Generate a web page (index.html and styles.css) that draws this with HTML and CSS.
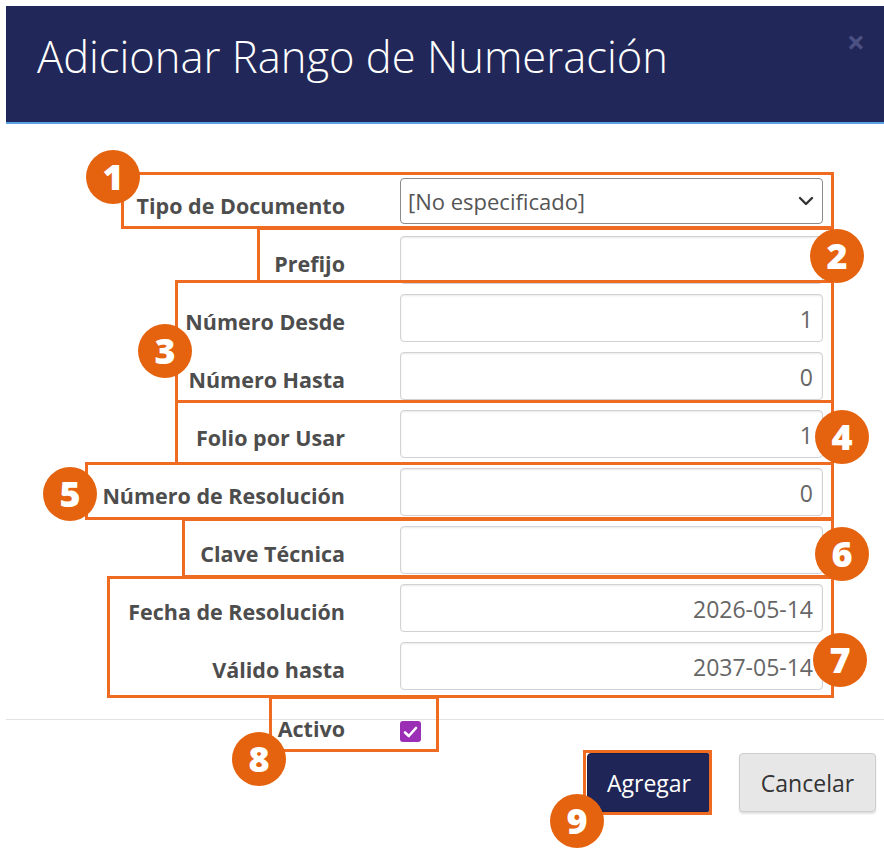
FILE: index.html
```html
<!DOCTYPE html>
<html lang="es">
<head>
<meta charset="utf-8">
<title>Adicionar Rango de Numeración</title>
<link rel="stylesheet" href="styles.css">
</head>
<body>
<div class="modal">
  <div class="modal-header">
    <h1 class="modal-title">Adicionar Rango de Numeración</h1>
    <span class="close">×</span>
  </div>
  <div class="modal-body">
    <div class="row">
      <label class="lbl">Tipo de Documento</label>
      <div class="select">
        <span>[No especificado]</span>
        <svg class="chev" width="16" height="10" viewBox="0 0 16 10"><path d="M2 2 L8 8 L14 2" fill="none" stroke="#333" stroke-width="2.4" stroke-linecap="round" stroke-linejoin="round"/></svg>
      </div>
    </div>
    <div class="row"><label class="lbl">Prefijo</label><div class="input"></div></div>
    <div class="row"><label class="lbl">Número Desde</label><div class="input">1</div></div>
    <div class="row"><label class="lbl">Número Hasta</label><div class="input">0</div></div>
    <div class="row"><label class="lbl">Folio por Usar</label><div class="input">1</div></div>
    <div class="row"><label class="lbl">Número de Resolución</label><div class="input">0</div></div>
    <div class="row"><label class="lbl">Clave Técnica</label><div class="input"></div></div>
    <div class="row"><label class="lbl">Fecha de Resolución</label><div class="input">2026-05-14</div></div>
    <div class="row"><label class="lbl">Válido hasta</label><div class="input">2037-05-14</div></div>
  </div>
  <div class="modal-footer">
    <div class="row row-check">
      <label class="lbl">Activo</label>
      <div class="checkbox"><svg width="15" height="12" viewBox="0 0 15 12"><path d="M2 6.5 L5.8 10 L13 2" fill="none" stroke="#fff" stroke-width="2.6" stroke-linecap="round" stroke-linejoin="round"/></svg></div>
    </div>
    <div class="actions">
      <button class="btn btn-primary">Agregar</button>
      <button class="btn btn-default">Cancelar</button>
    </div>
  </div>
</div>

<div class="box b1"></div>
<div class="box b2"></div>
<div class="box b3"></div>
<div class="box b4"></div>
<div class="box b5"></div>
<div class="box b6"></div>
<div class="box b7"></div>
<div class="box b8"></div>
<div class="box b9"></div>

<div class="badge n1">1</div>
<div class="badge n2">2</div>
<div class="badge n3">3</div>
<div class="badge n4">4</div>
<div class="badge n5">5</div>
<div class="badge n6">6</div>
<div class="badge n7">7</div>
<div class="badge n8">8</div>
<div class="badge n9">9</div>
</body>
</html>
```

FILE: styles.css
```css
html, body {
  margin: 0;
  padding: 0;
  background: #fff;
  width: 884px;
  height: 856px;
  overflow: hidden;
  font-family: "Open Sans", "Liberation Sans", sans-serif;
}

.modal {
  margin: 6px 0 0 6px;
  width: 878px;
}

.modal-header {
  height: 116px;
  background: #212758;
  border-bottom: 2px solid #5aa3e6;
  display: flex;
  align-items: center;
  position: relative;
}

.modal-title {
  margin: 0 0 14px 31px;
  font-weight: 300;
  font-size: 43.5px;
  color: #fff;
  line-height: 1.2;
}

.close {
  position: absolute;
  right: 19px;
  top: 20px;
  font-size: 32px;
  font-weight: 700;
  color: #4b5082;
  line-height: 1;
}

.modal-body {
  padding: 54px 0 19px 0;
}

.row {
  display: grid;
  grid-template-columns: 339px 423px;
  column-gap: 55px;
  height: 48px;
  margin-bottom: 10px;
}

.lbl {
  text-align: right;
  font-weight: 700;
  font-size: 21.5px;
  color: #4d4d4d;
  line-height: 30px;
  padding-top: 13px;
}

.input {
  box-sizing: border-box;
  height: 48px;
  border: 1px solid #d2d2d2;
  border-radius: 4px;
  box-shadow: inset 0 1px 2px rgba(0,0,0,0.09);
  font-size: 23px;
  color: #666;
  text-align: right;
  padding: 0 9px 0 10px;
  line-height: 48px;
}

.select {
  box-sizing: border-box;
  height: 46px;
  border: 1px solid #8c8c8c;
  border-radius: 4px;
  font-size: 22px;
  color: #555;
  padding: 0 8px 0 7px;
  display: flex;
  align-items: center;
  justify-content: space-between;
}

.modal-footer {
  border-top: 1px solid #e3e3e3;
}

.row-check {
  margin-top: -6px;
  height: 30px;
  margin-bottom: 0;
}

.row-check .lbl { padding-top: 0; }

.checkbox {
  width: 21px;
  height: 21px;
  margin-top: 7px;
  border-radius: 3px;
  background: #9a2fb6;
  display: flex;
  align-items: center;
  justify-content: center;
}

.actions {
  display: flex;
  justify-content: flex-end;
  gap: 28px;
  padding: 9px 8px 0 0;
}

.btn {
  height: 59px;
  font-family: "Open Sans", "Liberation Sans", sans-serif;
  font-size: 23px;
  border-radius: 4px;
  padding: 0;
}

.btn-primary {
  width: 124px;
  background: #1f2556;
  color: #fff;
  border: 1px solid #1a1f4a;
}

.btn-default {
  width: 137px;
  background: #e7e7e7;
  color: #333;
  border: 1px solid #cdcdcd;
  box-shadow: 0 2px 2px rgba(0,0,0,0.12);
}

/* annotation overlay */
.box {
  position: absolute;
  box-sizing: border-box;
  border: 3px solid #ef6b22;
}
.b1 { left: 121px; top: 172px; width: 713px; height: 57px; }
.b2 { left: 257px; top: 227px; width: 577px; height: 56px; }
.b3 { left: 175px; top: 280px; width: 659px; height: 123px; }
.b4 { left: 175px; top: 400px; width: 659px; height: 65px; }
.b5 { left: 85px; top: 462px; width: 749px; height: 58px; }
.b6 { left: 182px; top: 518px; width: 652px; height: 60px; }
.b7 { left: 107px; top: 576px; width: 727px; height: 122px; }
.b8 { left: 269px; top: 696px; width: 170px; height: 56px; }
.b9 { left: 583px; top: 750px; width: 129px; height: 65px; }

.badge {
  position: absolute;
  width: 54px;
  height: 54px;
  border-radius: 50%;
  background: #e5630f;
  color: #fff;
  font-weight: 800;
  font-size: 36px;
  line-height: 54px;
  text-align: center;
}
.n1 { left: 86px; top: 150px; }
.n2 { left: 810px; top: 229px; }
.n3 { left: 138px; top: 324px; }
.n4 { left: 815px; top: 410px; }
.n5 { left: 43px; top: 467px; }
.n6 { left: 815px; top: 527px; }
.n7 { left: 813px; top: 633px; }
.n8 { left: 232px; top: 732px; }
.n9 { left: 550px; top: 794px; }
```
